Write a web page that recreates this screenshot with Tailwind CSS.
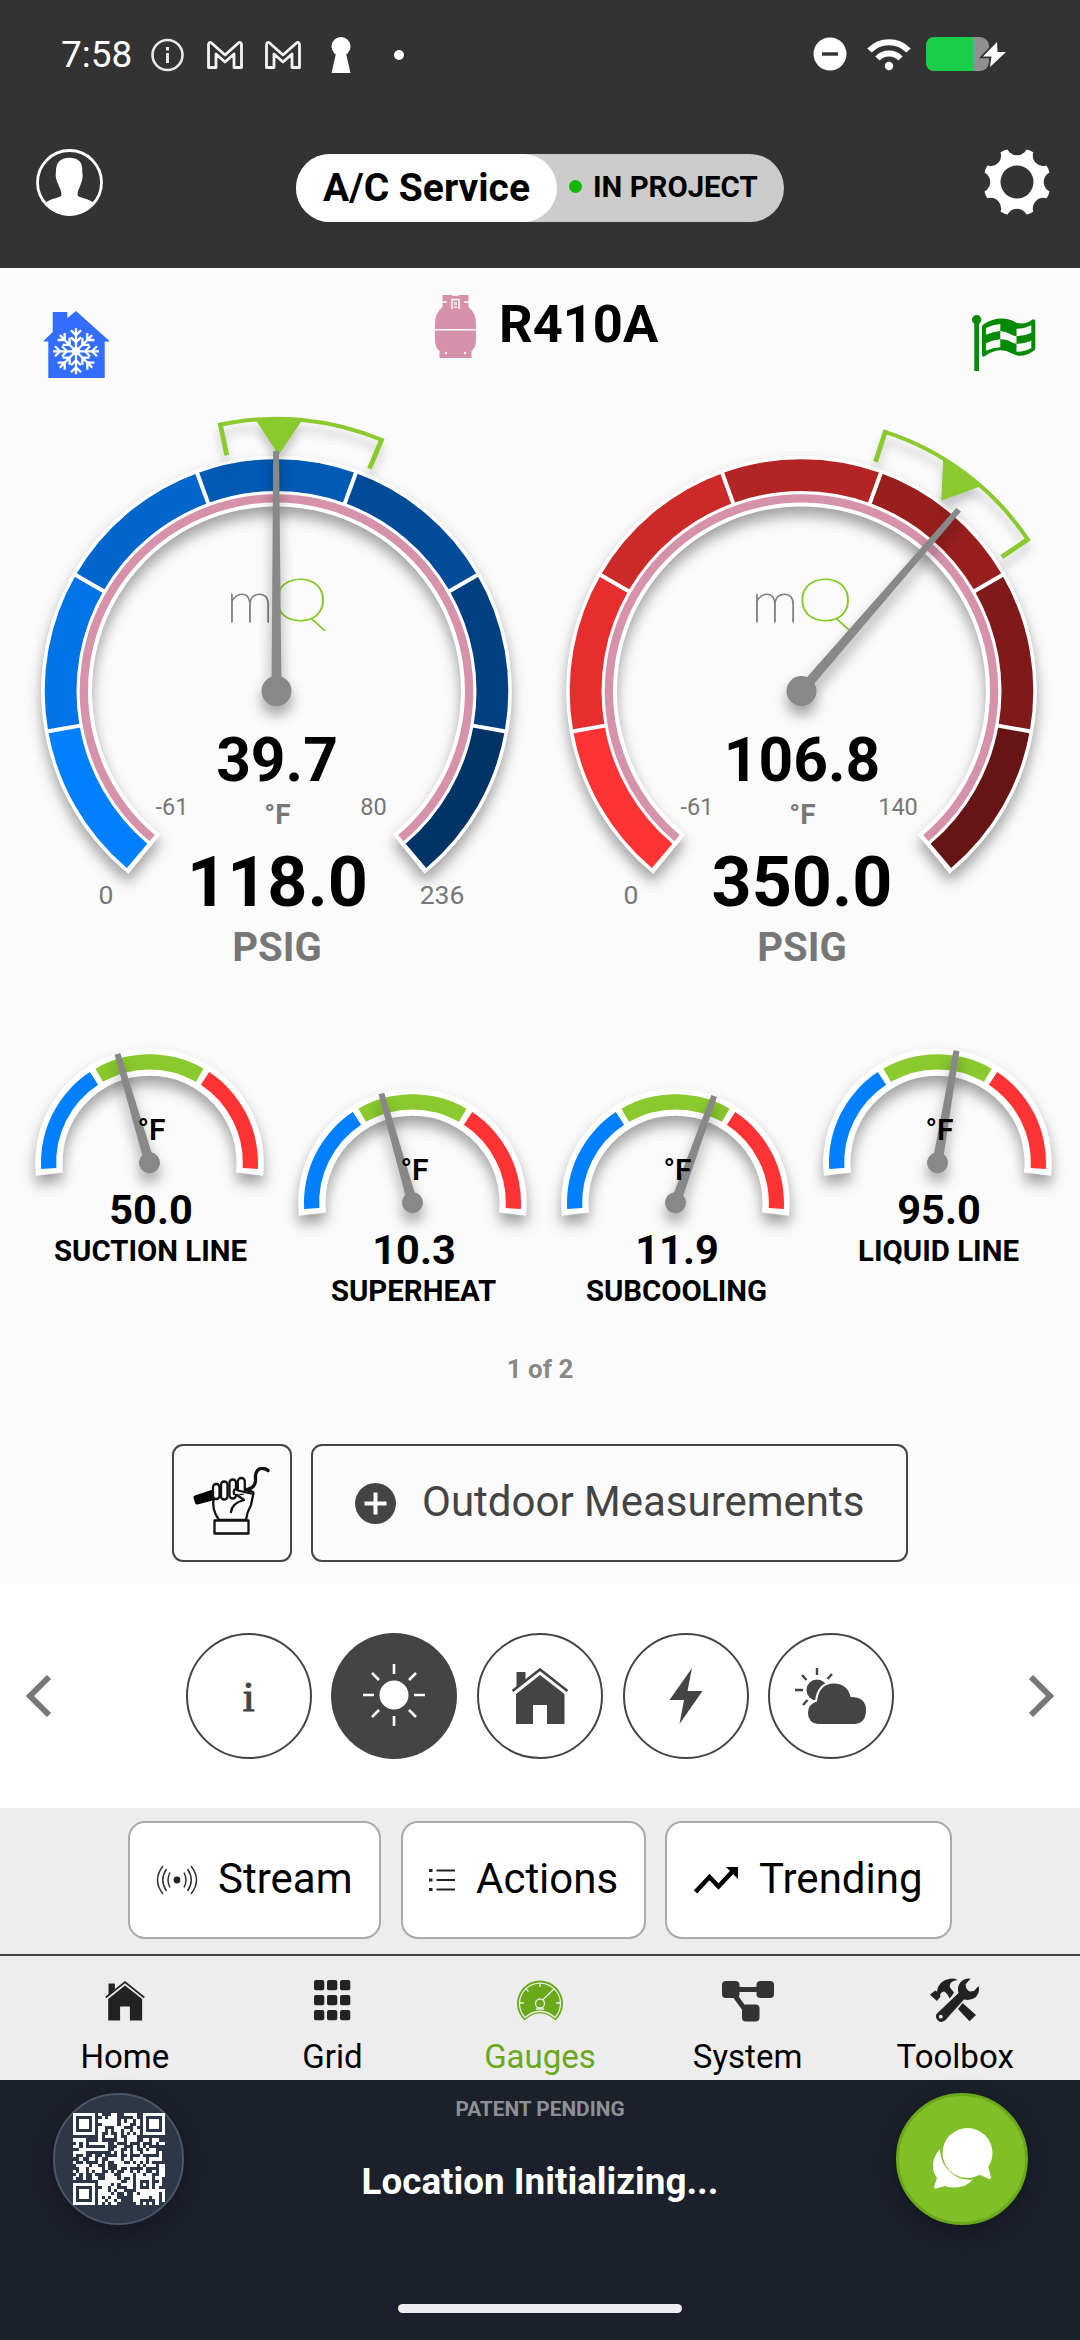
<!DOCTYPE html>
<html lang="en">
<head>
<meta charset="utf-8">
<title>Gauges</title>
<script src="https://cdn.jsdelivr.net/npm/@tailwindcss/browser@4"></script>
</head>
<body class="w-[1080px] h-[2340px] flex flex-col overflow-hidden bg-[#fbfbfb] font-['Roboto',sans-serif] text-black">

<!-- Status bar and app header -->
<header class="h-[268px] shrink-0 bg-[#333333] flex flex-col">
  <div class="h-[110px] flex items-center justify-between pl-[61px] pr-[73px]">
    <div class="flex items-center text-white">
      <span class="text-[37px] leading-none w-[90px] pb-[2px]">7:58</span>
      <svg class="w-[34px] h-[34px]" viewBox="0 0 34 34" fill="none" stroke="#e8e8e8" stroke-width="2.6"><circle cx="16.5" cy="17" r="15"/><path d="M16.5 15v10M16.5 9v3.4" stroke-width="3"/></svg>
      <svg class="ml-[21px] w-[38px] h-[30px]" viewBox="0 0 38 30" fill="none" stroke="#f4f4f4" stroke-width="2.8" stroke-linejoin="round"><path d="M2.5 27.5V5Q2.5 2 5 2.5L19 15 33 2.5Q35.500 2 35.500 5V27.500H28V14L19 22 10 14V27.500Z"/></svg>
      <svg class="ml-[20px] w-[38px] h-[30px]" viewBox="0 0 38 30" fill="none" stroke="#f4f4f4" stroke-width="2.8" stroke-linejoin="round"><path d="M2.5 27.5V5Q2.500 2 5 2.500L19 15 33 2.500Q35.500 2 35.500 5V27.500H28V14L19 22 10 14V27.500Z"/></svg>
      <svg class="ml-[29px] w-[20px] h-[36px]" viewBox="0 0 20 36" fill="#fff"><circle cx="10" cy="9.500" r="9.500"/><path d="M5.500 14H14.500L19.500 36H.5Z"/></svg>
      <span class="ml-[43px] w-[10px] h-[10px] rounded-full bg-white"></span>
    </div>
    <div class="flex items-center pb-[2px]">
      <svg class="w-[34px] h-[34px]" viewBox="0 0 34 34"><circle cx="17" cy="17" r="16.500" fill="#fff"/><path d="M9 17H25" stroke="#333" stroke-width="3.400"/></svg>
      <svg class="ml-[20px] w-[44px] h-[34px]" viewBox="0 0 44 34" fill="none" stroke="#fff" stroke-width="6"><path d="M2.500 13.500A27 27 0 0 1 41.500 13.500"/><path d="M10.500 21.500A16 16 0 0 1 33.500 21.500"/><circle cx="22" cy="29" r="4.200" fill="#fff" stroke="none"/></svg>
      <svg class="ml-[15px] w-[81px] h-[34px]" viewBox="0 0 81 34"><rect width="63" height="34" rx="9" fill="#909090"/><path d="M9 0H47V34H9Q0 34 0 25V9Q0 0 9 0Z" fill="#1bce4a"/><path d="M71 5 57 19.500H65.500L64 30 80 15H71.500Z" fill="#fff" stroke="#333" stroke-width="3.500" paint-order="stroke"/></svg>
    </div>
  </div>
  <div class="h-[158px] flex items-start justify-between pl-[36px] pr-[29px] pt-[39px]">
    <svg class="w-[67px] h-[67px]" viewBox="0 0 66 66"><defs><clipPath id="head"><circle cx="33" cy="33" r="32.500"/></clipPath></defs><circle cx="33" cy="33" r="31.500" fill="none" stroke="#fff" stroke-width="2.800"/><path clip-path="url(#head)" fill="#fff" d="M33 8.500C42.500 8.500 46.500 14 45.500 22 46.800 29 45 32 43.500 36.500 42.500 39 40.500 42 41 46 45 48.500 53 49.500 56 52.500L60 66H6L10 52.500C13 49.500 21 48.500 25 46 25.500 42 23.500 39 22.500 36.500 21 32 18.500 29 19.700 22 19.500 14 23.500 8.500 33 8.500Z"/></svg>
    <div class="mt-[5px] -ml-[6px] h-[68px] w-[488px] rounded-full bg-[#cccccc] flex items-center">
      <div class="h-[68px] w-[261px] rounded-full bg-white flex items-center justify-center text-[39px] leading-none font-bold">A/C Service</div>
      <span class="ml-[12px] mb-[4px] w-[13px] h-[13px] rounded-full bg-[#14b800]"></span>
      <span class="ml-[11px] text-[29.4px] leading-none font-bold">IN PROJECT</span>
    </div>
    <svg class="w-[68px] h-[68px] -mt-[1px]" viewBox="-34 -34 68 68"><defs><mask id="cog"><circle r="34" fill="#fff"/><circle r="16.500" fill="#000"/><circle cy="-37.300" r="10.600"/><circle cy="37.300" r="10.600"/><circle cx="37.300" r="10.600"/><circle cx="-37.300" r="10.600"/><circle cx="26.400" cy="26.400" r="10.600"/><circle cx="-26.400" cy="26.400" r="10.600"/><circle cx="26.400" cy="-26.400" r="10.600"/><circle cx="-26.400" cy="-26.400" r="10.600"/></mask></defs><rect x="-34" y="-34" width="68" height="68" fill="#fff" mask="url(#cog)"/></svg>
  </div>
</header>

<main class="h-[1316px] shrink-0 flex flex-col">
  <!-- Refrigerant -->
  <div class="h-[132px] flex items-start justify-between pl-[43px] pr-[44px]">
    <svg class="mt-[43px] w-[67px] h-[67px]" viewBox="0 0 67 67"><path fill="#336dff" d="M0 30.500 9.700 21V1H24.300V7L33 0 67 30.500H61.700V67H5.300V30.500Z"/><g id="flake" stroke="#fff" stroke-width="2.300" fill="none" transform="translate(33 40.300)"></g></svg>
    <div class="flex items-start ml-[10px]">
      <svg class="mt-[27px] w-[41px] h-[63px]" viewBox="0 0 41 63" fill="#d691ab"><path d="M7.500 0H33.500V12Q41 18 41 28V34H0V28Q0 18 7.500 12Z"/><path d="M0 35.500H41V46Q41 52 36.500 56V63H4.500V56Q0 52 0 46Z"/><path d="M7 7H12M29 7H34M17 14V4.500H24V14" stroke="#fbfbfb" stroke-width="1.500" fill="none"/><path d="M19 7h3v3h-3zM19 11h3v2h-3z" fill="#fbfbfb" opacity=".7"/><path d="M17 0h7" stroke="#fbfbfb" stroke-width="1.500"/><circle cx="11" cy="58" r="1.200" fill="#fbfbfb"/><circle cx="30" cy="58" r="1.200" fill="#fbfbfb"/></svg>
      <span class="mt-[30px] ml-[23px] w-[158px] text-[52.5px] leading-none font-bold">R410A</span>
    </div>
    <svg class="mt-[47px] w-[64px] h-[57px]" viewBox="0 0 64 57"><g fill="#058a05"><circle cx="4.700" cy="4.700" r="4.700"/><path d="M2.300 6H7V56H2.300Z"/><path d="M10 12Q10 10 12 9 29 -1 44 7.500 52 10.500 60 4.700 63.300 3 63.300 7V33Q63.300 35 61.500 36 50 44 40 38.500 27 31 13 41 10 43 10 39Z"/></g><g fill="#fbfbfb"><path d="M14 13Q21 9.500 28.300 9V16Q21 16.500 14 19.700Z"/><path d="M14 28.300Q21 25 28.300 24.300V32.300Q21 32.500 14 35.700Z"/><path d="M28.300 16Q34 16.500 38 19T44.500 21V28.700Q41 28.500 38 26.500T28.300 24.300Z"/><path d="M44.500 13.700Q52 14 59.300 10.300V17.700Q52 21.500 44.500 21Z"/><path d="M44.500 28.700Q52 29 59.300 25.700V33Q52 37 44.500 36.700Z"/></g></svg>
  </div>

  <!-- Pressure gauges -->
  <div class="h-[590px] grid grid-cols-[525px_525px] pl-[14px]">
    <svg class="w-[525px] h-[590px] overflow-visible" viewBox="-262.5 -291 525 590" text-anchor="middle" fill="#777" font-size="26">
      <g class="big" data-needle="-0.100" data-bracket="-12.300,23.100,0.500" data-colors="#0080ff,#0073e6,#0066cc,#0059b3,#004c99,#004080,#003366"></g>
      <text x=".5" y="90" font-size="60.500" font-weight="700" fill="#000">39.7</text>
      <text y="132.500" x="1" font-size="28" font-weight="700">°F</text>
      <text x="-104.500" y="124" font-size="23.500">-61</text><text x="97" y="124" font-size="23.500">80</text>
      <text y="214.500" x="1" font-size="70" font-weight="700" fill="#000">118.0</text>
      <text x="-170.500" y="212.500" font-size="26.500">0</text><text x="165.500" y="212.500" font-size="26.500">236</text>
      <text x=".5" y="269.500" font-size="40" font-weight="700">PSIG</text>
    </svg>
    <svg class="w-[525px] h-[590px] overflow-visible" viewBox="-262.5 -291 525 590" text-anchor="middle" fill="#777" font-size="26">
      <g class="big" data-needle="40.900" data-bracket="17.500,56.600,36.300" data-colors="#ff3333,#e62e2e,#cc2929,#b32424,#991f1f,#801a1a,#661414"></g>
      <text x=".5" y="90" font-size="60.500" font-weight="700" fill="#000">106.8</text>
      <text y="132.500" x="1" font-size="28" font-weight="700">°F</text>
      <text x="-104.500" y="124" font-size="23.500">-61</text><text x="96.500" y="124" font-size="23.500">140</text>
      <text x=".5" y="214.500" font-size="70" font-weight="700" fill="#000">350.0</text>
      <text x="-170.500" y="212.500" font-size="26.500">0</text>
      <text x=".5" y="269.500" font-size="40" font-weight="700">PSIG</text>
    </svg>
  </div>

  <!-- Temperature gauges -->
  <div class="mt-[50px] h-[290px] grid grid-cols-4 w-[1051px] ml-[18px] items-start">
    <svg class="w-[263px] h-[240px] overflow-visible" viewBox="-131.5 -122.7 263 240" text-anchor="middle" font-weight="700"><g class="small" data-needle="-16.400"></g><text x="2" y="-22.500" font-size="30" font-weight="600">°F</text><text x="1.500" y="61" font-size="41.500">50.0</text><text x="1" y="98.300" font-size="29.400">SUCTION LINE</text></svg>
    <svg class="mt-[40px] w-[263px] h-[240px] overflow-visible" viewBox="-131.5 -122.7 263 240" text-anchor="middle" font-weight="700"><g class="small" data-needle="-15.900"></g><text x="2" y="-22.500" font-size="30" font-weight="600">°F</text><text x="1.500" y="61" font-size="41.500">10.3</text><text x="1" y="98.300" font-size="29.400">SUPERHEAT</text></svg>
    <svg class="mt-[40px] w-[263px] h-[240px] overflow-visible" viewBox="-131.5 -122.7 263 240" text-anchor="middle" font-weight="700"><g class="small" data-needle="19.900"></g><text x="2" y="-22.500" font-size="30" font-weight="600">°F</text><text x="1.500" y="61" font-size="41.500">11.9</text><text x="1" y="98.300" font-size="29.400">SUBCOOLING</text></svg>
    <svg class="w-[263px] h-[240px] overflow-visible" viewBox="-131.5 -122.7 263 240" text-anchor="middle" font-weight="700"><g class="small" data-needle="9.600"></g><text x="2" y="-22.500" font-size="30" font-weight="600">°F</text><text x="1.500" y="61" font-size="41.500">95.0</text><text x="1" y="98.300" font-size="29.400">LIQUID LINE</text></svg>
  </div>

  <div class="mt-[26px] h-[88px] text-center text-[26px] leading-none font-bold text-[#888888]">1 of 2</div>

  <div class="flex gap-[19px] pl-[172px] text-[#444444]">
    <div class="w-[120px] h-[118px] border-2 border-[#444444] rounded-[11px] pl-[19px] pt-[21px]">
      <svg class="w-[77px] h-[68px]" viewBox="0 0 77 68" fill="none" stroke="#111" stroke-width="2.300" stroke-linecap="round" stroke-linejoin="round"><path d="M2.500 30.500 19 25V31.500L4 35.500Z" fill="#000" stroke="#000" stroke-width="4"/><path d="M50 23Q62 22 62.500 14V8Q64 1 70 1.500 73 1.500 75 3.500" stroke-width="3.300"/><path d="M21 30Q18 42 26 53H53Q54 45 58 38L60.500 26Q60 24 52 23" fill="#fbfbfb"/><rect x="20" y="17" width="6.500" height="15" rx="3.200" fill="#fbfbfb"/><rect x="28" y="14.500" width="6.500" height="18" rx="3.200" fill="#fbfbfb"/><rect x="36.500" y="12.500" width="6.500" height="19" rx="3.200" fill="#fbfbfb"/><rect x="44.800" y="11" width="7" height="16" rx="3.400" fill="#fbfbfb"/><path d="M41 27Q40 20 45 23.500L58 26.500" fill="#fbfbfb"/><path d="M44 28 51 33Q39 36 38 45"/><rect x="21.500" y="53.500" width="34" height="13" fill="#fbfbfb"/></svg>
    </div>
    <div class="w-[597px] h-[118px] border-2 border-[#444444] rounded-[11px] flex items-center pl-[42px]">
      <svg class="w-[41px] h-[41px]" viewBox="0 0 41 41"><circle cx="20.500" cy="20.500" r="20.500" fill="#444"/><path d="M9.500 20.500H31.500M20.500 9.500V31.500" stroke="#fbfbfb" stroke-width="4"/></svg>
      <span class="ml-[26px] pb-[2px] text-[42px] leading-none whitespace-nowrap">Outdoor Measurements</span>
    </div>
  </div>
</main>

<!-- Category carousel -->
<section class="h-[224px] shrink-0 bg-white flex items-center justify-between pl-[24px] pr-[24px]">
  <svg class="w-[28px] h-[44px]" viewBox="0 0 28 44" fill="none" stroke="#777" stroke-width="6"><path d="M25 3 6 22 25 41"/></svg>
  <div class="flex gap-[19.6px]">
    <div class="w-[126px] h-[126px] rounded-full border-2 border-[#444444] flex items-center justify-center font-['Liberation_Serif',serif] text-[#444444] text-[43px] leading-none font-medium"><span class="[-webkit-text-stroke:1.2px_#444444]">i</span></div>
    <div class="w-[126px] h-[126px] rounded-full bg-[#444444] flex items-center justify-center">
      <svg class="w-[64px] h-[64px]" viewBox="-32 -31 64 64" fill="#fff" stroke="#fff" stroke-width="2.600"><circle r="14.500" stroke="none"/><path d="M0-31V-21M0 21V31M-31 0H-20M20 0H31M-22-22-15-15M22 22 15 15M22-22 15-15M-22 22-15 15"/></svg>
    </div>
    <div class="w-[126px] h-[126px] rounded-full border-2 border-[#444444] flex items-center justify-center">
      <svg class="w-[58px] h-[58px]" viewBox="0 0 58 58"><path fill="#444" d="M5.500 5H14.500V13L5.500 21Z"/><path fill="#444" d="M29 8 53.500 27V57H36V38H22V57H5V27Z"/><path d="M1.500 24 29 2.500 56.500 24" fill="none" stroke="#444" stroke-width="2.600"/></svg>
    </div>
    <div class="w-[126px] h-[126px] rounded-full border-2 border-[#444444] flex items-center justify-center">
      <svg class="w-[34px] h-[58px]" viewBox="0 0 34 58" fill="#444"><path d="M23 1 .5 33H15L10.500 57 33.500 24H18.500Z"/></svg>
    </div>
    <div class="w-[126px] h-[126px] rounded-full border-2 border-[#444444] flex items-center justify-center">
      <svg class="w-[72px] h-[58px]" viewBox="0 0 72 58" fill="#444"><circle cx="22" cy="23" r="10.500"/><path d="M22 1V8M7 8 11.500 13M37 7 32.500 12M0 23H8M8 38 12.500 33" stroke="#444" stroke-width="2.400"/><path d="M23 57Q13 56 13 46 13 37 22 34.500 24 16.500 39 16.500 53 17 55.500 30 71 30 71 43 71 56 60 57Z" stroke="#fff" stroke-width="4" paint-order="stroke"/></svg>
    </div>
  </div>
  <svg class="w-[28px] h-[44px]" viewBox="0 0 28 44" fill="none" stroke="#777" stroke-width="6"><path d="M3 3 22 22 3 41"/></svg>
</section>

<!-- Quick actions -->
<section class="h-[146px] shrink-0 bg-[#ededed] flex items-start pt-[13px] pl-[128px] text-[42px] leading-none">
  <div class="w-[253px] h-[118px] bg-white border-2 border-[#aaaaaa] rounded-[17px] flex items-center pl-[26px]">
    <svg class="w-[42px] h-[30px]" viewBox="-21 -15 42 30" fill="none" stroke="#333" stroke-width="1.500"><circle r="3.400" fill="#222" stroke="none"/><path d="M-14-14Q-25 0-14 14M-10.500-11Q-18 0-10.500 11M-7-7.500Q-11 0-7 7.500M14-14Q25 0 14 14M10.500-11Q18 0 10.500 11M7-7.500Q11 0 7 7.500"/></svg>
    <span class="ml-[20px] pb-[2px]">Stream</span>
  </div>
  <div class="ml-[20px] w-[245px] h-[118px] bg-white border-2 border-[#aaaaaa] rounded-[17px] flex items-center pl-[26px]">
    <svg class="w-[27px] h-[24px]" viewBox="0 0 27 24" stroke="#222" stroke-width="1.800"><path d="M0 2.500H3.500M0 12H3.500M0 21.500H3.500" stroke-width="3"/><path d="M7.500 2.500H26M7.500 12H26M7.500 21.500H26"/></svg>
    <span class="ml-[20px] pb-[2px]">Actions</span>
  </div>
  <div class="ml-[19px] w-[287px] h-[118px] bg-white border-2 border-[#aaaaaa] rounded-[17px] flex items-center pl-[27px]">
    <svg class="w-[45px] h-[28px]" viewBox="0 0 45 28"><path d="M1.500 26 15.500 11 24.500 20.500 39 5" fill="none" stroke="#000" stroke-width="4.600"/><path d="M32 1H44V13Z"/></svg>
    <span class="ml-[20px] pb-[2px]">Trending</span>
  </div>
</section>

<!-- Tab bar -->
<nav class="h-[126px] shrink-0 bg-[#ededed] border-t-2 border-[#444444] grid grid-cols-5 px-[21px] text-center text-[33px] leading-none">
  <div class="flex flex-col items-center pt-[23px]">
    <svg class="w-[42px] h-[44px]" viewBox="-1 0 60 60"><path fill="#222" d="M5.500 5H14.500V13L5.500 21ZM29 8 53.500 27V58H36V38H22V58H5V27Z"/><path d="M1.500 25 29 3 56.500 25" fill="none" stroke="#222" stroke-width="2.600"/></svg>
    <span class="mt-[17px]">Home</span>
  </div>
  <div class="flex flex-col items-center pt-[23px]">
    <svg class="w-[38px] h-[44px]" viewBox="0 0 38 44" fill="#222"><rect x="1" y="1" width="10.300" height="10.300" rx="2"/><rect x="14" y="1" width="10.300" height="10.300" rx="2"/><rect x="27" y="1" width="10.300" height="10.300" rx="2"/><rect x="1" y="16" width="10.300" height="10.300" rx="2"/><rect x="14" y="16" width="10.300" height="10.300" rx="2"/><rect x="27" y="16" width="10.300" height="10.300" rx="2"/><rect x="1" y="31" width="10.300" height="10.300" rx="2"/><rect x="14" y="31" width="10.300" height="10.300" rx="2"/><rect x="27" y="31" width="10.300" height="10.300" rx="2"/></svg>
    <span class="mt-[17px]">Grid</span>
  </div>
  <div class="flex flex-col items-center pt-[23px] text-[#69a91a]">
    <svg class="w-[48px] h-[44px]" viewBox="-24 -24 48 44"><path d="M-15.500 17.500A23 23 0 1 1 15.500 17.500Q0 3-15.500 17.500Z" fill="#69a91a"/><g fill="none" stroke="#ededed" stroke-width="1.300"><path d="M-15 14.500A20.500 20.500 0 1 1 15 14.500Q0 2-15 14.500Z"/><path d="M0-20V-16M-20 0H-16M16 0H20M-14.500-14.500-11.500-11.500M14.500-14.500 2.500-3M-4 6H4"/><circle r="4.500" cy="0.500"/></g></svg>
    <span class="mt-[17px]">Gauges</span>
  </div>
  <div class="flex flex-col items-center pt-[23px]">
    <svg class="w-[54px] h-[44px]" viewBox="0 0 54 44" fill="#333"><rect x="1" y="2" width="17.500" height="17" rx="4"/><rect x="35.500" y="2" width="17.500" height="17" rx="4"/><rect x="21" y="25.500" width="17.500" height="17" rx="4"/><path d="M12 10.500H42M12 14 28 36" stroke="#333" stroke-width="5"/></svg>
    <span class="mt-[17px]">System</span>
  </div>
  <div class="flex flex-col items-center pt-[22px]">
    <svg class="w-[50px] h-[45px]" viewBox="0 0 50 45"><path fill="#222" d="M0 16.700 5 12.500 7 13.500Q8 3 20 .8 25-.3 27.500 2 18.500 3.500 20 9.500L24 14.500Q22 18 19.500 20.500L17.500 16.500 14.500 13.500Q11 13.500 10 17L10.500 18.500 7 23Z"/><path fill="#222" d="M32.500 25 46 37 39.500 43.300 28 31Z"/><path fill="#222" stroke="#ededed" stroke-width="2" paint-order="stroke" d="M6.500 36 28.500 15Q26.500 7 32.500 2.500 36 0 40.500 .8L35.500 6.500Q36 11.500 39.500 13.500L44 13 48.500 8Q50.500 14 46 19 41 23 34 21.500L15 42.500Q10.500 45.500 7.500 42 5 39 6.500 36Z"/><circle cx="10.800" cy="38.700" r="1.900" fill="#ededed"/></svg>
    <span class="mt-[17px]">Toolbox</span>
  </div>
</nav>

<!-- Footer -->
<footer class="grow bg-[#1c202b] flex flex-col items-center justify-between pb-[27px]">
  <div class="w-full flex items-start justify-between pl-[53px] pr-[52px] pt-[13px]">
    <div class="w-[131px] h-[132px] rounded-full bg-[#2d3748] border-2 border-[#4a5568] flex items-center justify-center shadow-[0_6px_24px_rgba(0,0,0,0.3)]">
      <svg id="qr" class="w-[92px] h-[92px]" viewBox="0 0 29 29" shape-rendering="crispEdges" fill="#fff"></svg>
    </div>
    <div class="flex flex-col items-center">
      <span class="mt-[6px] text-[20.8px] leading-none font-bold text-[#8d9096]">PATENT PENDING</span>
      <span class="mt-[44px] text-[36.8px] leading-none font-bold text-white">Location Initializing...</span>
    </div>
    <div class="w-[132px] h-[132px] rounded-full bg-[#80bf28] border-[3px] border-[#69a91a] flex items-center justify-center shadow-[0_6px_24px_rgba(0,0,0,0.3)]">
      <svg class="w-[62px] h-[62px]" viewBox="0 0 62 62" fill="#fff"><path d="M9 21Q1 30 2 41 2.500 45 6 50L3 59Q3 61 5 60.500L14 58Q22 61 33 58 39 55 42 51.500 30 53 21 45.500 9 36 9 21Z"/><circle cx="36.500" cy="25" r="25"/><path d="M57 38 60 49Q60 51.500 58 51L47 46Z"/></svg>
    </div>
  </div>
  <div class="w-[284px] h-[9px] rounded-full bg-[#ececee]"></div>
</footer>

<script>
const rad = d => d * Math.PI / 180;
const pt = (r, a) => (r * Math.sin(rad(a))).toFixed(2) + ' ' + (-r * Math.cos(rad(a))).toFixed(2);
const band = (r0, r1, a, b, fill) => {
  const big = b - a > 180 ? 1 : 0;
  return `<path fill="${fill}" d="M${pt(r1, a)}A${r1} ${r1} 0 ${big} 1 ${pt(r1, b)}L${pt(r0, b)}A${r0} ${r0} 0 ${big} 0 ${pt(r0, a)}Z"/>`;
};
const shade = 'style="filter:drop-shadow(0 9px 7px rgba(0,0,0,.36))"';
const softShade = 'style="filter:drop-shadow(0 9px 5px rgba(0,0,0,.2))"';

document.querySelectorAll('.big').forEach(g => {
  const [from, to, mark] = g.dataset.bracket.split(',').map(Number);
  const colors = g.dataset.colors.split(',');
  let s = `<g ${shade}>${band(184.5, 235.3, -141, 141, '#fff')}</g>`;
  colors.forEach((c, i) => s += band(200, 231.8, -139.8 + i * 39.94, -139.8 + (i + 1) * 39.94, c));
  for (let i = 1; i < 7; i++) s += `<path d="M${pt(198, -140 + i * 40)}L${pt(233, -140 + i * 40)}" stroke="#fff" stroke-width="4"/>`;
  s += band(188.5, 196.8, -139.8, 139.8, '#d691ab');
  s += `<g font-family="Lato" font-weight="100" text-anchor="start" stroke-width=".9"><text transform="translate(-50.500 -69.500) scale(1.100 1)" font-size="55" fill="#808080" stroke="#808080">m</text><text transform="translate(-4.500 -70.500) scale(1.180 1)" font-size="61" fill="#8acb2c" stroke="#8acb2c">Q</text></g>`;
  s += `<g ${softShade} fill="none" stroke="#8bca2e"><path stroke-width="4" d="M${pt(272.3, from)}A272.3 272.3 0 0 1 ${pt(272.3, to)}"/><path stroke-width="4.800" d="M${pt(241, from + .4)}L${pt(274, from + .4)}M${pt(241, to - .4)}L${pt(274, to - .4)}"/><path fill="#8bca2e" stroke="none" d="M${pt(272, mark - 4.9)}L${pt(236, mark)}L${pt(272, mark + 4.9)}Z"/></g>`;
  s += `<g ${shade}><g transform="rotate(${g.dataset.needle})" fill="#888"><path d="M-5 0-2.900-240H2.900L5 0Z"/><circle r="15"/></g></g>`;
  g.innerHTML = s;
});

document.querySelectorAll('.small').forEach(g => {
  g.innerHTML = `<g ${shade}>${band(87, 114.3, -96.5, 96.5, '#fff')}</g>`
    + band(93.3, 108.5, -93.3, -33.4, '#0080ff') + band(93.3, 108.5, -29.9, 29.9, '#8bca2e') + band(93.3, 108.5, 33.4, 93.3, '#ff3333')
    + `<g ${shade}><g transform="rotate(${g.dataset.needle})" fill="#888"><path d="M-5 0-3-113.500H3L5 0Z"/><circle r="10.500"/></g></g>`;
});

let arms = '<circle r="4" fill="#fff" stroke="none"/>';
for (let a = 0; a < 360; a += 45) arms += `<path transform="rotate(${a})" d="M0 0V-23M-5-21 0-16 5-21M-5-14 0-9 5-14"/>`;
document.getElementById('flake').innerHTML = arms;

const rows = [
  '........#...##..####.........',
  '.........#.###.....#.........',
  '........######.#.##.#........',
  '.........#####.###..#........',
  '........##...###...#.........',
  '........##.#.##.##.##........',
  '........#..#..#.#.#.#........',
  '........#.###.#..###.........',
  '####....#.....##.###..##.##..',
  '.#.#.######..#...#...#...#.##',
  '##.#......#...##...#.#.#.....',
  '..#########..##..#.#..#.##...',
  '####........#.#.##.##.####.#.',
  '#..#..#..#....#..#...#.....#.',
  '..#..##.#..####.##.####.####.',
  '#..#....#.#..###..#.#.#.#....',
  '.####.##..#...######.#.###.##',
  '..##.####.#...#..#....#....##',
  '#.##.#.##..#.#..##.#.##..#.##',
  '.#.#..#...###..####.##.##..##',
  '#..#..##..####.#..#.......##.',
  '........#######..##.#...#..#.',
  '........####.#.####...#.#.##.',
  '.........##.##...##.#...#.#..',
  '........###.#.##.........####',
  '........####.#..#..#.######.#',
  '........#.#.##.....#####.##.#',
  '........##.##.#....##.....#.#',
  '........#.#.##......#.#.#.#..'
];
let q = '';
rows.forEach((r, y) => [...r].forEach((c, x) => { if (c === '#') q += `<rect x="${x}" y="${y}" width="1.02" height="1.02"/>`; }));
const eye = (x, y, n) => `<path fill-rule="evenodd" d="M${x} ${y}h${n}v${n}h-${n}zM${x + 1} ${y + 1}v${n - 2}h${n - 2}v-${n - 2}z"/><rect x="${x + 2}" y="${y + 2}" width="${n - 4}" height="${n - 4}"/>`;
q += eye(0, 0, 7) + eye(22, 0, 7) + eye(0, 22, 7) + eye(20, 20, 5);
document.getElementById('qr').innerHTML = q;
</script>
</body>
</html>
